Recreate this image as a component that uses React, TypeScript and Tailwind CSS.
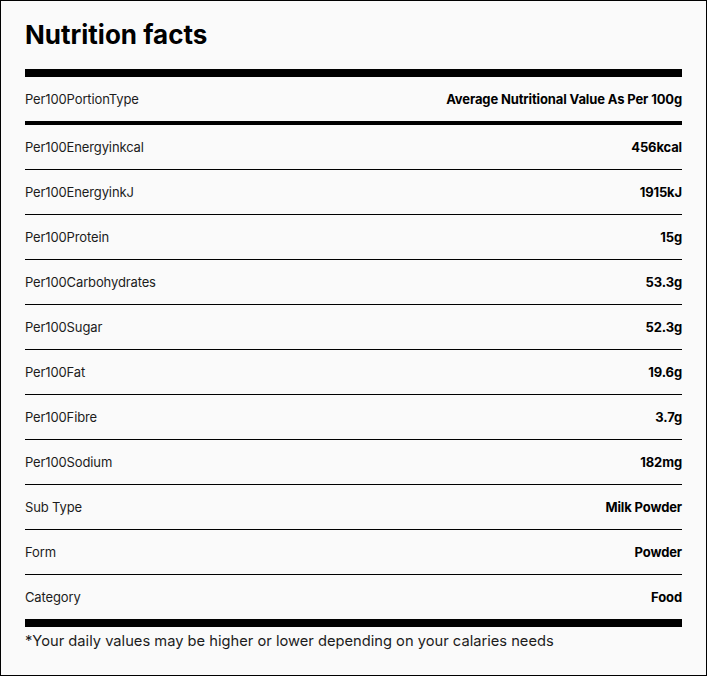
import React from "react";

const rows: [string, string][] = [
  ["Per100Energyinkcal", "456kcal"],
  ["Per100EnergyinkJ", "1915kJ"],
  ["Per100Protein", "15g"],
  ["Per100Carbohydrates", "53.3g"],
  ["Per100Sugar", "52.3g"],
  ["Per100Fat", "19.6g"],
  ["Per100Fibre", "3.7g"],
  ["Per100Sodium", "182mg"],
  ["Sub Type", "Milk Powder"],
  ["Form", "Powder"],
  ["Category", "Food"],
];

export default function App() {
  return (
    <div
      className="box-border h-[676px] w-full border border-black bg-[#fafafa] px-6 pt-[18px] text-[#1c1c1c]"
      style={{ fontFamily: "Inter, 'Liberation Sans', sans-serif" }}
    >
      <h1 className="text-[26px] font-bold leading-[32px] text-black">Nutrition facts</h1>
      <div className="mt-[18px] h-2 bg-black" />
      <div className="box-border flex h-[44px] items-center justify-between pt-[2px] text-[13px] tracking-[-0.01em]">
        <span>Per100PortionType</span>
        <span className="font-bold text-black">Average Nutritional Value As Per 100g</span>
      </div>
      <div className="h-1 bg-black" />
      {rows.map(([label, value], i) => (
        <div
          key={label}
          className={
            i < rows.length - 1
              ? "box-border flex h-[45px] items-center justify-between border-b border-black pt-[2px] text-[13px] tracking-[-0.01em]"
              : "box-border flex h-[44px] items-center justify-between pt-[2px] text-[13px] tracking-[-0.01em]"
          }
        >
          <span>{label}</span>
          <span className="font-bold text-black">{value}</span>
        </div>
      ))}
      <div className="h-2 bg-black" />
      <p className="mt-[4px] text-[14.7px] leading-5">
        *Your daily values may be higher or lower depending on your calaries needs
      </p>
    </div>
  );
}
